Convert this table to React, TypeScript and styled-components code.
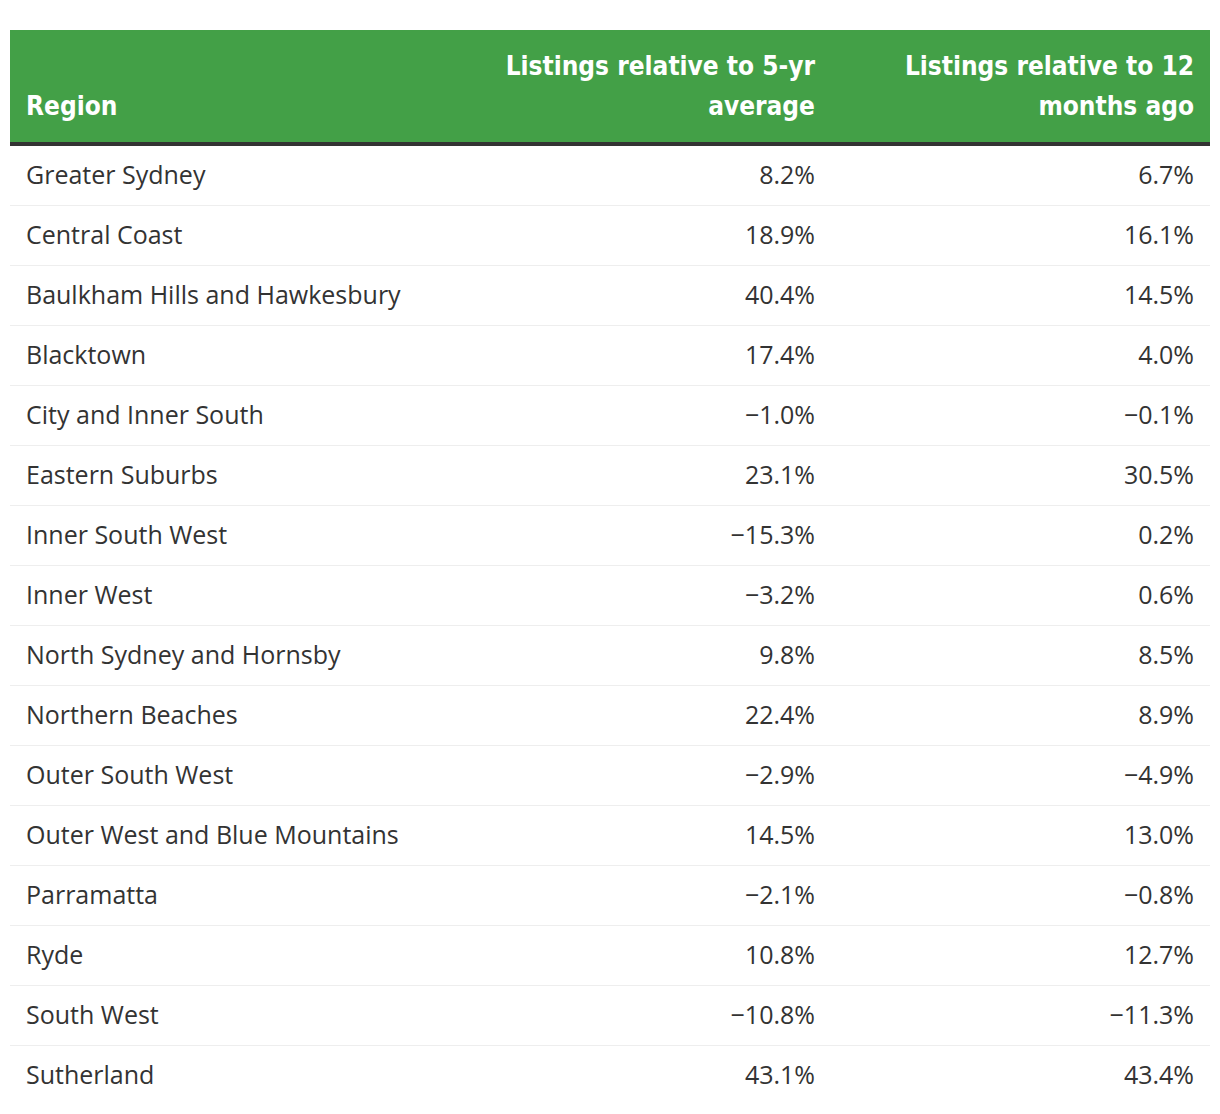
import React from "react";
import styled, { createGlobalStyle } from "styled-components";

const GlobalStyle = createGlobalStyle`
  html, body { margin: 0; padding: 0; background: #ffffff; }
  body { font-family: "Open Sans", "Noto Sans", sans-serif; color: #333333; }
  *, *::before, *::after { box-sizing: border-box; }
`;

const Wrap = styled.div`
  padding: 30px 10px 0 10px;
`;

const Table = styled.table`
  width: 1200px;
  border-collapse: collapse;
  table-layout: fixed;
`;

const Col = styled.col<{ $width: number }>`
  width: ${(p) => p.$width}px;
`;

const HeadCell = styled.th<{ $align: "left" | "right" }>`
  background: #43a047;
  color: #ffffff;
  font-family: "DejaVu Sans Condensed", "DejaVu Sans", sans-serif;
  font-stretch: condensed;
  font-weight: 700;
  font-size: 26px;
  line-height: 40px;
  text-align: ${(p) => p.$align};
  vertical-align: bottom;
  padding: 16px 16px;
  border-bottom: 4px solid #333333;
`;

const Row = styled.tr<{ $last: boolean }>`
  border-bottom: ${(p) => (p.$last ? "none" : "1px solid #eeeeee")};
`;

const Cell = styled.td<{ $align: "left" | "right" }>`
  font-family: "Open Sans", "Noto Sans", sans-serif;
  font-size: 25px;
  line-height: 29px;
  padding: 14px 16px 16px;
  text-align: ${(p) => p.$align};
  color: #333333;
`;

const rows: [string, string, string][] = [
  ["Greater Sydney", "8.2%", "6.7%"],
  ["Central Coast", "18.9%", "16.1%"],
  ["Baulkham Hills and Hawkesbury", "40.4%", "14.5%"],
  ["Blacktown", "17.4%", "4.0%"],
  ["City and Inner South", "\u22121.0%", "\u22120.1%"],
  ["Eastern Suburbs", "23.1%", "30.5%"],
  ["Inner South West", "\u221215.3%", "0.2%"],
  ["Inner West", "\u22123.2%", "0.6%"],
  ["North Sydney and Hornsby", "9.8%", "8.5%"],
  ["Northern Beaches", "22.4%", "8.9%"],
  ["Outer South West", "\u22122.9%", "\u22124.9%"],
  ["Outer West and Blue Mountains", "14.5%", "13.0%"],
  ["Parramatta", "\u22122.1%", "\u22120.8%"],
  ["Ryde", "10.8%", "12.7%"],
  ["South West", "\u221210.8%", "\u221211.3%"],
  ["Sutherland", "43.1%", "43.4%"],
];

export default function App() {
  return (
    <>
      <GlobalStyle />
      <Wrap>
        <Table>
          <colgroup>
            <Col $width={442} />
            <Col $width={379} />
            <Col $width={379} />
          </colgroup>
          <thead>
            <tr>
              <HeadCell $align="left">Region</HeadCell>
              <HeadCell $align="right">Listings relative to 5-yr average</HeadCell>
              <HeadCell $align="right">Listings relative to 12 months ago</HeadCell>
            </tr>
          </thead>
          <tbody>
            {rows.map((r, i) => (
              <Row key={r[0]} $last={i === rows.length - 1}>
                <Cell $align="left">{r[0]}</Cell>
                <Cell $align="right">{r[1]}</Cell>
                <Cell $align="right">{r[2]}</Cell>
              </Row>
            ))}
          </tbody>
        </Table>
      </Wrap>
    </>
  );
}
